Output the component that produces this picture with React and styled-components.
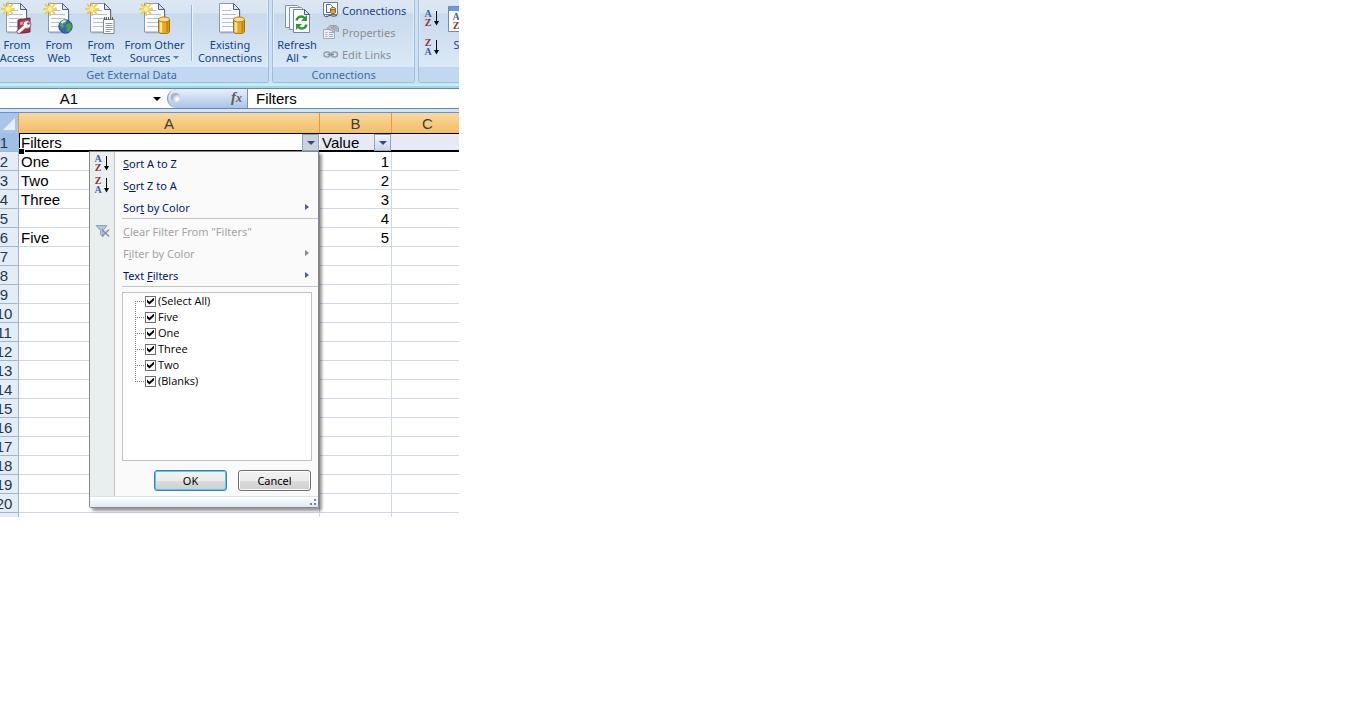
import React, { useState } from 'react';
import styled, { createGlobalStyle } from 'styled-components';

const GlobalStyle = createGlobalStyle`
  * {
    box-sizing: border-box;
  }

  body {
    margin: 0;
    background: #fff;
  }

  button, input {
    font: inherit;
    color: inherit;
    margin: 0;
    padding: 0;
    border: none;
    background: none;
  }
`;

const uiFont = `'Noto Sans', 'Open Sans', sans-serif`;
const cellFont = `'Liberation Sans', Arial, sans-serif`;

const Workbook = styled.main`
  width: 100%;
  max-width: 459px;
  overflow: hidden;
  background: #c3daf3;
  font-family: ${uiFont};
  font-size: 11px;
`;

/* ---- ribbon ---- */

const Ribbon = styled.div`
  display: flex;
  gap: 3px;
  margin-left: -6px;
  padding-bottom: 1px;
  background: #cfe2f5;
`;

const Group = styled.section`
  display: flex;
  flex-direction: column;
  flex-shrink: 0;
  border: solid #9ebcdc;
  border-width: 0 1px 1px;
  border-radius: 0 0 3px 3px;
  background: linear-gradient(#dde7f3 0, #d8e4f2 13px, #c8d9ed 14px, #dae9f6 66px);
  box-shadow: inset -1px 0 #e4eef8, inset 1px 0 #e4eef8;
`;

const GroupBody = styled.div`
  display: flex;
  height: 67px;
  padding: 0 3px;
`;

const GroupLabel = styled.h2`
  margin: 0;
  height: 15px;
  border-radius: 0 0 3px 3px;
  background: #c1d8f0;
  color: #3e6aaa;
  font-size: 11px;
  font-weight: normal;
  line-height: 16px;
  text-align: center;
`;

const BigButton = styled.button`
  display: flex;
  flex-direction: column;
  align-items: center;
  flex-shrink: 0;
  width: ${(props) => props.$width || 42}px;
  padding-top: 2px;
  color: #15428b;
  line-height: 13px;
  white-space: nowrap;

  svg {
    margin-bottom: 4px;
  }
`;

const Separator = styled.span`
  width: 2px;
  height: 56px;
  margin: 5px 2px 0;
  border-left: 1px solid #9ab6d6;
  border-right: 1px solid #edf4fb;
`;

const SmallButtons = styled.div`
  display: flex;
  flex-direction: column;
`;

const SmallButton = styled.button`
  display: flex;
  align-items: center;
  gap: 3px;
  height: 22px;
  padding: 0 5px 2px;
  color: ${(props) => (props.disabled ? '#8d8d8d' : '#15428b')};
`;

const SortButtons = styled.div`
  display: flex;
  flex-direction: column;
  gap: 12px;
  padding: 10px 8px 0 2px;

  button {
    height: 17px;
  }
`;

const Caret = styled.span`
  display: inline-block;
  margin-left: 3px;
  vertical-align: 3px;
  border: 3px solid transparent;
  border-bottom-width: 0;
  border-top-color: #5578ae;
`;

/* ---- formula bar ---- */

const FormulaBar = styled.div`
  display: flex;
  height: 29px;
  border-bottom: 1px solid #6591cd;
  border-top: 2px solid #aefaff;
  background: linear-gradient(#b6cbe3 0, #b6cbe3 2px, #d5e4f5 3px, #d5e4f5 100%);
  padding: 2px 0 3px;
  font-family: ${cellFont};
  font-size: 15px;
  color: #000;
`;

const BarInner = styled.div`
  display: flex;
  flex: 1;
  border: solid #5f89bd;
  border-width: 1px 0;
  background: #fff;
`;

const NameBox = styled.input`
  width: 138px;
  text-align: center;
  outline: none;
`;

const NameDrop = styled.button`
  display: flex;
  align-items: center;
  width: 29px;
  padding-left: 15px;
`;

const DropArrow = styled.span`
  border: 4px solid transparent;
  border-bottom-width: 0;
  border-top-color: ${(props) => props.$color || '#000'};
`;

const FxPill = styled.div`
  display: flex;
  align-items: center;
  justify-content: space-between;
  width: 81px;
  padding: 0 5px 2px 3px;
  border: solid #6c93c7;
  border-width: 0 1px;
  border-radius: 10px 0 0 10px;
  background: linear-gradient(#e8f0fb, #a9c4e8);
`;

const Knob = styled.span`
  width: 9px;
  height: 9px;
  border-radius: 50%;
  background: radial-gradient(circle at 70% 70%, #fff 10%, #a3acbc 65%);
`;

const FxButton = styled.button`
  color: #5a5d63;
  font-family: 'Liberation Serif', serif;
  font-size: 15px;
  font-style: italic;
  font-weight: bold;
  line-height: 15px;

  small {
    font-size: 12px;
  }
`;

const FormulaInput = styled.input`
  flex: 1;
  min-width: 0;
  padding-left: 8px;
  outline: none;
`;

/* ---- sheet ---- */

/* column C runs a little past the window edge */
const Sheet = styled.table`
  width: calc(100% + 5px);
  table-layout: fixed;
  border-collapse: separate;
  border-spacing: 0;
  background: #fff;
  font-family: ${cellFont};
  font-size: 15px;
  line-height: 17px;
  color: #000;
`;

const Corner = styled.td`
  padding: 0;
  border-right: 1px solid #f29536;
  background: #a9c4e9;

  svg {
    display: block;
    margin: 1px 0 0 2px;
  }
`;

const ColumnHead = styled.th`
  height: 20px;
  padding: 0;
  border-right: 1px solid #f29536;
  background: linear-gradient(#f9d99f, #f0be62);
  color: #3d3d3d;
  font-weight: normal;
`;

const RowHead = styled.th`
  padding: 1px 10px 0 0;
  border-right: 1px solid #9eb6ce;
  border-bottom: 1px solid #9eb6ce;
  background: ${(props) => (props.$active ? '#9fbfe5' : '#e4ecf7')};
  color: #26364a;
  font-weight: normal;

  span {
    display: flex;
    justify-content: center;
    width: 8px;
  }
`;

const Cell = styled.td`
  padding: 1px 2px 0;
  border-right: 1px solid #d0d7e5;
  border-bottom: 1px solid #d0d7e5;
  text-align: ${(props) => (props.$number ? 'right' : 'left')};
`;

const Row = styled.tr`
  height: ${(props) => (props.$cut ? 4 : 19)}px;

  ${RowHead}, ${Cell} {
    ${(props) => props.$cut && 'border-bottom: none;'}
  }
`;

const HeadCell = styled.td`
  position: relative;
  padding: 0 2px;
  border-top: 1px solid #000;
  border-bottom: 2px solid #000;
  border-left: ${(props) => (props.$active ? '1px solid #000' : 'none')};
  background: ${(props) => (props.$active ? '#fff' : '#e7eaf5')};
`;

const HeadContent = styled.div`
  display: flex;
  justify-content: space-between;
  height: 16px;
  margin-right: -1px;
  margin-left: ${(props) => (props.$active ? -1 : 0)}px;
  line-height: 18px;
`;

const FillHandle = styled.span`
  position: absolute;
  left: -1px;
  bottom: -4px;
  width: 6px;
  height: 6px;
  border: solid #fff;
  border-width: 1px 1px 0 0;
  background: #000;
`;

const FilterButton = styled.button`
  display: flex;
  align-items: center;
  justify-content: center;
  width: 17px;
  height: 17px;
  border: 1px solid #8ba4cd;
  background: ${(props) => (props.$open ? '#ccd2dc' : 'linear-gradient(#f3f6fb, #cbd6e8)')};
`;

/* ---- filter menu ---- */

const Menu = styled.div`
  position: absolute;
  z-index: 2;
  top: 17px;
  left: 69px;
  width: 230px;
  border: 1px solid #868686;
  border-radius: 0 0 2px 2px;
  background: #fafafa;
  box-shadow: 3px 3px 3px rgba(0, 0, 0, 0.4);
  font-family: ${uiFont};
  font-size: 11px;
  color: #00156e;
`;

const MenuBody = styled.div`
  padding-bottom: 5px;
  background: linear-gradient(to right, #e9eeee 24px, #c5c5c5 24px, #c5c5c5 25px, #fafafa 25px);
`;

const MenuItem = styled.button`
  display: flex;
  align-items: center;
  width: 100%;
  height: 22px;
  padding-right: 9px;
  text-align: left;
  color: ${(props) => (props.disabled ? '#a3a3a3' : '#00156e')};

  u {
    text-underline-offset: 1px;
  }
`;

const ItemIcon = styled.span`
  display: flex;
  width: 33px;
  padding-left: 4px;
`;

const ItemText = styled.span`
  flex: 1;
`;

const SubArrow = styled.span`
  border: 3px solid transparent;
  border-right-width: 0;
  border-left: 4px solid ${(props) => (props.$muted ? '#858585' : '#4a5d9c')};
`;

const Rule = styled.hr`
  height: 1px;
  margin: 0 0 1px 32px;
  border: none;
  background: #c5c5c5;
`;

const ValueList = styled.ul`
  height: 169px;
  margin: 5px 6px 0 32px;
  padding: 0 0 0 12px;
  border: 1px solid #c0c0c0;
  background: #fff;
  color: #000;
  list-style: none;
`;

const ValueItem = styled.li`
  display: flex;
  align-items: center;
  height: 16px;
  background:
    repeating-linear-gradient(to right, #808080 0 1px, transparent 1px 2px) 0 8px / 10px 1px no-repeat,
    repeating-linear-gradient(#808080 0 1px, transparent 1px 2px) 0 0 / 1px 16px no-repeat;
  padding-left: 10px;

  &:first-child {
    background-position: 0 8px, 0 8px;
  }

  &:last-child {
    background-position: 0 8px, 0 -8px;
  }

  label {
    display: flex;
    align-items: center;
    gap: 2px;
    font-family: 'Open Sans', sans-serif;
    line-height: 16px;
  }
`;

const Tick = styled.input`
  display: flex;
  align-items: center;
  justify-content: center;
  appearance: none;
  width: 11px;
  height: 11px;
  border: 1px solid #6e6e6e;
  background: #fff;

  &:checked::before {
    content: '';
    width: 7px;
    height: 7px;
    background: #000;
    clip-path: polygon(0 28%, 36% 62%, 100% 0, 100% 38%, 36% 100%, 0 68%);
  }
`;

const MenuActions = styled.div`
  display: flex;
  justify-content: flex-end;
  gap: 11px;
  padding: 9px 7px 0 0;
`;

const ActionButton = styled.button`
  width: 73px;
  height: 21px;
  border: 1px solid ${(props) => (props.$primary ? '#3c7fb1' : '#707070')};
  border-radius: 3px;
  background: linear-gradient(#f2f2f2 0, #ebebeb 50%, #dcdcdc 51%, #cfcfcf 100%);
  box-shadow: inset 0 0 0 1px ${(props) => (props.$primary ? '#5bc8ef' : '#fbfbfb')};
  color: #000;
  line-height: 19px;
`;

const MenuFoot = styled.div`
  display: flex;
  align-items: flex-end;
  justify-content: flex-end;
  height: 11px;
  padding: 0 1px 1px 0;
  border-top: 1px solid #d5e3ee;
  background: linear-gradient(#fff, #dcebf3);
`;

/* ---- icons ---- */

const Page = () => (
  <>
    <path d="M6.5 2.5h14l6 6v23h-20z" fill="#8e98aa" opacity="0.5" />
    <path d="M5.500 1.500h14l6 6v22.500h-20z" fill="#fbfcff" stroke="#8b98b3" />
    <path d="M19.500 1.500l6 6v22.500" stroke="#5d6b88" />
    <path d="M19.500 1.500v6h6z" fill="#dbe3f1" stroke="#4e5f82" />
    <path d="M8 8.500h9M8 12.500h14M8 16.500h14M8 20.500h14M8 24.500h14" stroke="#b3bfd9" />
  </>
);

const Spark = () => (
  <>
    <path d="M2 2l10 10M12 2L2 12M7 0v14M0 7h14" stroke="#f2c32c" strokeWidth="1.500" />
    <circle cx="7" cy="7" r="3.300" fill="#ffe04a" />
    <circle cx="7" cy="7" r="1.800" fill="#fffbd0" />
  </>
);

const Barrel = () => (
  <>
    <path d="M19.500 17.500v12c0 3 11 3 11 0v-12z" fill="#e9a820" stroke="#a4710e" />
    <path d="M22 19.500v11" stroke="#ffe9a0" strokeWidth="2.500" />
    <path d="M28.500 19v11" stroke="#c58512" strokeWidth="2" />
    <ellipse cx="25" cy="17.500" rx="5.500" ry="2.500" fill="#ffdf80" stroke="#b07c14" />
  </>
);

const overlays = {
  access: (
    <>
      <path d="M17 18l12-2v14l-12 1.500z" fill="#a8324c" stroke="#7c1e35" />
      <path d="M19 20l8-1v3l-8 1z" fill="#dd8da0" />
      <path d="M24 24l-7.500 7" stroke="#8f5c66" strokeWidth="4.500" />
      <circle cx="26" cy="22.500" r="4" fill="#fbf3f4" stroke="#8f5c66" />
      <path d="M25 23.500l-8 7" stroke="#fbf3f4" strokeWidth="2.800" />
      <circle cx="27.500" cy="21.500" r="1.300" fill="#a8324c" />
    </>
  ),
  web: (
    <>
      <circle cx="22.500" cy="24.500" r="6.700" fill="#2c68be" stroke="#24509a" />
      <path d="M18 20c2-2.500 5-2.500 6-2l-1 3-3 1 1 3-2 1-2-3z" fill="#58ad3e" />
      <path d="M24 22l4-1 1 4-3 5-3-1 1-3-2-2z" fill="#4aa338" />
      <path d="M18.500 21c1-1.500 2.500-2 4-2" stroke="#d9f1f8" strokeWidth="1.800" fill="none" />
    </>
  ),
  text: (
    <>
      <path d="M18.500 17.500h10.500v14h-10.500z" fill="#fff" stroke="#7f8796" />
      <path d="M19 16.500h10" stroke="#555f70" strokeWidth="3" strokeDasharray="1 1" />
      <path d="M20.500 21.500h7M20.500 23.500h7M20.500 25.500h7M20.500 27.500h7M20.500 29.500h5" stroke="#8f99aa" />
    </>
  ),
  barrel: <Barrel />,
};

const DocIcon = ({ overlay, spark }) => (
  <svg width="32" height="32" viewBox="0 0 32 32" fill="none" aria-hidden="true">
    <Page />
    {spark && <Spark />}
    {overlays[overlay]}
  </svg>
);

const RefreshIcon = () => (
  <svg width="32" height="32" viewBox="0 0 32 32" fill="none" aria-hidden="true">
    <path d="M4.500 3.500h12l4 4v18h-16z" fill="#f4f7fc" stroke="#8390aa" />
    <path d="M8.500 5.500h12l4 4v18h-16z" fill="#f4f7fc" stroke="#8390aa" />
    <path d="M12.500 7.500h11l5 5v18h-16z" fill="#fff" stroke="#7583a0" />
    <path d="M23.500 7.500v5h5z" fill="#dbe3f1" stroke="#4e5f82" />
    <path d="M15.500 18.500c1-4.500 6-5 8-2.500" stroke="#2f9a37" strokeWidth="2.500" />
    <path d="M26 13v6h-6z" fill="#2f9a37" />
    <path d="M25.500 22.500c-1 4.500-6 5-8 2.500" stroke="#2f9a37" strokeWidth="2.500" />
    <path d="M15 28v-6h6z" fill="#2f9a37" />
  </svg>
);

const ConnectionsIcon = () => (
  <svg width="16" height="16" viewBox="0 0 16 16" fill="none" aria-hidden="true">
    <path d="M.500.500h14v12h-14z" fill="#f6f8fc" stroke="#6f7a91" />
    <path d="M3.500 2.500h4l2 2v6h-6z" fill="#fff" stroke="#56637e" />
    <path d="M7.500 6.500v4c0 1.500 5 1.500 5 0v-4z" fill="#e0a02a" stroke="#99681a" />
    <ellipse cx="10" cy="6.500" rx="2.500" ry="1" fill="#ffdc86" stroke="#99681a" />
    <path d="M1 13.500c2 2 4 1 5 0s4 2 8 0" stroke="#3f4a5f" />
  </svg>
);

const PropertiesIcon = () => (
  <svg width="16" height="16" viewBox="0 0 16 16" fill="none" aria-hidden="true">
    <path d="M.500 5.500h11v9h-11z" fill="#eceff4" stroke="#a4abb7" />
    <path d="M2.500 8.500h2M6 8.500h4M2.500 10.500h2M6 10.500h4M2.500 12.500h2M6 12.500h4" stroke="#a4abb7" />
    <path d="M4 4.500l3-3h6l2.500 2v4l-3-1-2 2-2-2z" fill="#b9bfca" stroke="#959daa" />
    <path d="M8 3l4 3M10 2l4 3" stroke="#8c94a2" />
  </svg>
);

const LinksIcon = () => (
  <svg width="16" height="16" viewBox="0 0 16 16" fill="none" aria-hidden="true">
    <rect x="1" y="6" width="6" height="5" rx="2.500" stroke="#98a0ac" strokeWidth="1.500" />
    <rect x="8.500" y="6" width="6" height="5" rx="2.500" stroke="#98a0ac" strokeWidth="1.500" />
    <path d="M4.500 8.500h6.500" stroke="#7f8794" strokeWidth="1.500" />
  </svg>
);

const Letters = styled.text`
  font: bold 10px 'Liberation Serif', serif;
  text-anchor: middle;
`;

const SortIcon = ({ reverse }) => (
  <svg width="16" height="17" viewBox="0 0 16 17" aria-hidden="true">
    <Letters x="4" y="7" fill={reverse ? '#8f2f35' : '#3d5ea6'}>{reverse ? 'Z' : 'A'}</Letters>
    <Letters x="4" y="16" fill={reverse ? '#3d5ea6' : '#8f2f35'}>{reverse ? 'A' : 'Z'}</Letters>
    <path d="M12 1h1v10h2l-2.500 4.500L10 11h2z" fill="#000" />
  </svg>
);

const SortDialogIcon = () => (
  <svg width="32" height="32" viewBox="0 0 32 32" fill="none" aria-hidden="true">
    <path d="M.500 4.500h31v25h-31z" fill="#fff" stroke="#7288b4" />
    <path d="M1 5h30v4h-30z" fill="#6a9bea" />
    <Letters x="8" y="18" fill="#3d5ea6">A</Letters>
    <Letters x="8" y="27" fill="#8f2f35">Z</Letters>
  </svg>
);

const ClearFilterIcon = () => (
  <svg width="16" height="16" viewBox="0 0 16 16" fill="none" aria-hidden="true">
    <path d="M2 2.500h11l-4 5v6l-2.500-2v-4z" fill="#b4c2da" stroke="#91a2c2" />
    <path d="M8 6.500l7 7M15 6.500l-7 7" stroke="#8291b0" strokeWidth="1.500" />
  </svg>
);

const GripIcon = () => (
  <svg width="8" height="8" viewBox="0 0 8 8" aria-hidden="true">
    <path d="M5 1h2v2H5zM5 5h2v2H5zM1 5h2v2H1z" fill="#6d84b4" />
  </svg>
);

/* ---- data ---- */

const cells = {
  2: ['One', 1],
  3: ['Two', 2],
  4: ['Three', 3],
  5: ['', 4],
  6: ['Five', 5],
};

const rowNumbers = Array.from({ length: 19 }, (_, index) => index + 2);

const filterValues = ['(Select All)', 'Five', 'One', 'Three', 'Two', '(Blanks)'];

const FilterMenu = () => {
  const [checked, setChecked] = useState(filterValues);

  const handleToggle = (value) => {
    if (value === '(Select All)') {
      setChecked(checked.includes(value) ? [] : filterValues);
      return;
    }
    setChecked(
      checked.includes(value)
        ? checked.filter((item) => item !== value && item !== '(Select All)')
        : [...checked, value]
    );
  };

  return (
    <Menu>
      <MenuBody>
        <MenuItem>
          <ItemIcon><SortIcon /></ItemIcon>
          <ItemText><u>S</u>ort A to Z</ItemText>
        </MenuItem>
        <MenuItem>
          <ItemIcon><SortIcon reverse /></ItemIcon>
          <ItemText>S<u>o</u>rt Z to A</ItemText>
        </MenuItem>
        <MenuItem>
          <ItemIcon />
          <ItemText>Sor<u>t</u> by Color</ItemText>
          <SubArrow />
        </MenuItem>
        <Rule />
        <MenuItem disabled>
          <ItemIcon><ClearFilterIcon /></ItemIcon>
          <ItemText><u>C</u>lear Filter From "Filters"</ItemText>
        </MenuItem>
        <MenuItem disabled>
          <ItemIcon />
          <ItemText>F<u>i</u>lter by Color</ItemText>
          <SubArrow $muted />
        </MenuItem>
        <MenuItem>
          <ItemIcon />
          <ItemText>Text <u>F</u>ilters</ItemText>
          <SubArrow />
        </MenuItem>
        <Rule />
        <ValueList>
          {filterValues.map((value) => (
            <ValueItem key={value}>
              <label>
                <Tick
                  type="checkbox"
                  checked={checked.includes(value)}
                  onChange={() => handleToggle(value)}
                />
                {value}
              </label>
            </ValueItem>
          ))}
        </ValueList>
        <MenuActions>
          <ActionButton $primary>OK</ActionButton>
          <ActionButton>Cancel</ActionButton>
        </MenuActions>
      </MenuBody>
      <MenuFoot><GripIcon /></MenuFoot>
    </Menu>
  );
};

const App = () => {
  const [formula, setFormula] = useState('Filters');
  const [cellName, setCellName] = useState('A1');
  const [menuOpen, setMenuOpen] = useState(true);

  return (
    <>
      <GlobalStyle />
      <Workbook>
        <Ribbon>
          <Group>
            <GroupBody>
              <BigButton $width={38}><DocIcon overlay="access" spark />From<br />Access</BigButton>
              <BigButton $width={46}><DocIcon overlay="web" spark />From<br />Web</BigButton>
              <BigButton $width={38}><DocIcon overlay="text" spark />From<br />Text</BigButton>
              <BigButton $width={69}>
                <DocIcon overlay="barrel" spark />
                From Other
                <span>Sources<Caret /></span>
              </BigButton>
              <Separator />
              <BigButton $width={70}><DocIcon overlay="barrel" />Existing<br />Connections</BigButton>
            </GroupBody>
            <GroupLabel>Get External Data</GroupLabel>
          </Group>
          <Group>
            <GroupBody>
              <BigButton>
                <RefreshIcon />
                Refresh
                <span>All<Caret /></span>
              </BigButton>
              <SmallButtons>
                <SmallButton><ConnectionsIcon />Connections</SmallButton>
                <SmallButton disabled><PropertiesIcon />Properties</SmallButton>
                <SmallButton disabled><LinksIcon />Edit Links</SmallButton>
              </SmallButtons>
            </GroupBody>
            <GroupLabel>Connections</GroupLabel>
          </Group>
          <Group>
            <GroupBody>
              <SortButtons>
                <button aria-label="Sort A to Z"><SortIcon /></button>
                <button aria-label="Sort Z to A"><SortIcon reverse /></button>
              </SortButtons>
              <BigButton $width={32}><SortDialogIcon />Sort</BigButton>
            </GroupBody>
            <GroupLabel />
          </Group>
        </Ribbon>

        <FormulaBar>
          <BarInner>
            <NameBox
              aria-label="Name box"
              value={cellName}
              onChange={(e) => setCellName(e.target.value)}
            />
            <NameDrop aria-label="Names"><DropArrow /></NameDrop>
            <FxPill>
              <Knob />
              <FxButton aria-label="Insert function">f<small>x</small></FxButton>
            </FxPill>
            <FormulaInput
              aria-label="Formula"
              value={formula}
              onChange={(e) => setFormula(e.target.value)}
            />
          </BarInner>
        </FormulaBar>

        <Sheet>
          <colgroup>
            <col width="19" />
            <col width="301" />
            <col width="72" />
            <col />
          </colgroup>
          <thead>
            <tr>
              <Corner>
                <svg width="14" height="16" viewBox="0 0 14 16" aria-hidden="true">
                  <path d="M13 2v12H1z" fill="#e6effa" />
                </svg>
              </Corner>
              <ColumnHead>A</ColumnHead>
              <ColumnHead>B</ColumnHead>
              <ColumnHead>C</ColumnHead>
            </tr>
          </thead>
          <tbody>
            <Row>
              <RowHead $active><span>1</span></RowHead>
              <HeadCell $active>
                <HeadContent $active>
                  Filters
                  <FilterButton
                    $open={menuOpen}
                    aria-label="Filter column A"
                    onClick={() => setMenuOpen(!menuOpen)}
                  >
                    <DropArrow $color="#33478f" />
                  </FilterButton>
                </HeadContent>
                <FillHandle />
                {menuOpen && <FilterMenu />}
              </HeadCell>
              <HeadCell>
                <HeadContent>
                  Value
                  <FilterButton aria-label="Filter column B"><DropArrow $color="#33478f" /></FilterButton>
                </HeadContent>
              </HeadCell>
              <HeadCell />
            </Row>
            {rowNumbers.map((number) => (
              <Row key={number}>
                <RowHead><span>{number}</span></RowHead>
                <Cell>{cells[number] && cells[number][0]}</Cell>
                <Cell $number>{cells[number] && cells[number][1]}</Cell>
                <Cell />
              </Row>
            ))}
            <Row $cut>
              <RowHead />
              <Cell />
              <Cell />
              <Cell />
            </Row>
          </tbody>
        </Sheet>
      </Workbook>
    </>
  );
};

export default App;
